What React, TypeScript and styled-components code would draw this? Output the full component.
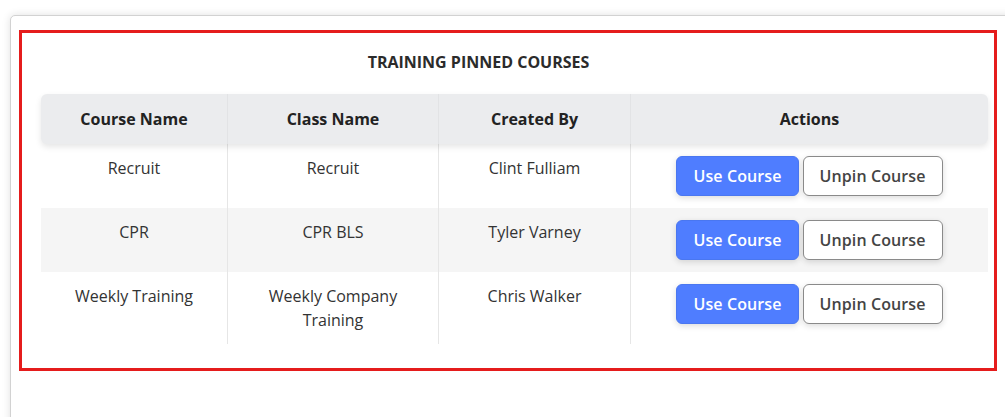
import React from "react";
import styled, { createGlobalStyle } from "styled-components";

const Global = createGlobalStyle`
  html, body { margin: 0; padding: 0; background: #ffffff; overflow: hidden; }
  body { font-family: "Open Sans", "Liberation Sans", sans-serif; }
  * { box-sizing: border-box; }
`;

const Page = styled.div`
  width: 1005px;
  height: 417px;
  overflow: hidden;
  padding: 15px 0 0 10px;
`;

const Card = styled.div`
  width: 1020px;
  height: 440px;
  background: #fff;
  border: 1px solid #d2d2d2;
  border-radius: 5px;
  box-shadow: 0 0 8px rgba(0, 0, 0, 0.12);
  padding: 14px 0 0 8px;
`;

const Frame = styled.div`
  width: 978px;
  border: 3px solid #e51c1c;
  padding: 18px 6px 24px 19px;
`;

const Title = styled.div`
  font-size: 16px;
  font-weight: 700;
  line-height: 22px;
  color: #2b2b2b;
  text-align: center;
  margin: 0 72px 21px 0;
`;

const columns = "186px 211px 192px 1fr";

const HeadRow = styled.div`
  display: grid;
  grid-template-columns: ${columns};
  background: #ebecee;
  border-radius: 6px;
  box-shadow: 0 3px 6px rgba(0, 0, 0, 0.1);
  position: relative;
  z-index: 1;
`;

const HeadCell = styled.div`
  height: 50px;
  display: flex;
  align-items: center;
  justify-content: center;
  font-size: 16px;
  font-weight: 700;
  color: #222;
  & + & { border-left: 1px solid #e2e3e5; }
`;

const Row = styled.div<{ $alt?: boolean }>`
  display: grid;
  grid-template-columns: ${columns};
  background: ${(p) => (p.$alt ? "#f5f5f5" : "transparent")};
`;

const Cell = styled.div`
  padding: 12px 10px;
  text-align: center;
  font-size: 16px;
  line-height: 24px;
  color: #333;
  & + & { border-left: 1px solid #e6e6e6; }
`;

const Actions = styled.div`
  display: flex;
  justify-content: center;
  gap: 4px;
`;

const Button = styled.button<{ $primary?: boolean }>`
  height: 40px;
  padding: 0 16px;
  border-radius: 6px;
  font-family: "Open Sans", "Liberation Sans", sans-serif;
  font-size: 16px;
  font-weight: 600;
  letter-spacing: 0.1px;
  cursor: pointer;
  box-shadow: 0 2px 6px rgba(0, 0, 0, 0.14);
  background: ${(p) => (p.$primary ? "#4f7dff" : "#ffffff")};
  color: ${(p) => (p.$primary ? "#ffffff" : "#444")};
  border: 1px solid ${(p) => (p.$primary ? "#4a77f0" : "#8a8a8a")};
`;

const rows = [
  { course: "Recruit", cls: "Recruit", by: "Clint Fulliam" },
  { course: "CPR", cls: "CPR BLS", by: "Tyler Varney" },
  { course: "Weekly Training", cls: "Weekly Company Training", by: "Chris Walker" },
];

export default function App() {
  return (
    <Page>
      <Global />
      <Card>
        <Frame>
          <Title>TRAINING PINNED COURSES</Title>
          <HeadRow>
            <HeadCell>Course Name</HeadCell>
            <HeadCell>Class Name</HeadCell>
            <HeadCell>Created By</HeadCell>
            <HeadCell>Actions</HeadCell>
          </HeadRow>
          {rows.map((r, i) => (
            <Row key={r.course} $alt={i % 2 === 1}>
              <Cell>{r.course}</Cell>
              <Cell>{r.cls}</Cell>
              <Cell>{r.by}</Cell>
              <Cell>
                <Actions>
                  <Button $primary>Use Course</Button>
                  <Button>Unpin Course</Button>
                </Actions>
              </Cell>
            </Row>
          ))}
        </Frame>
      </Card>
    </Page>
  );
}
